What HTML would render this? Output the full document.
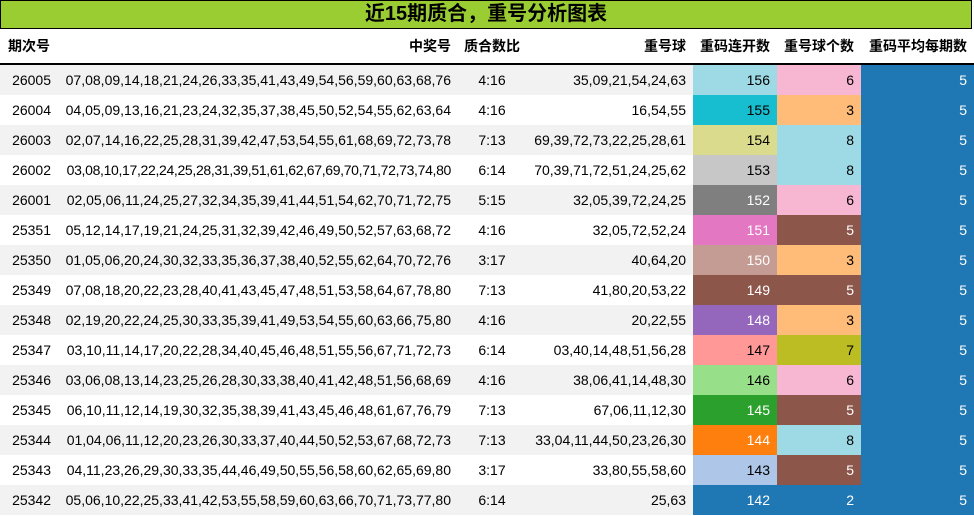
<!DOCTYPE html><html><head><meta charset="utf-8"><style>
body{margin:0;width:974px;height:516px;overflow:hidden;background:#fff;font-family:"Liberation Sans","Noto Sans CJK SC",sans-serif;font-size:14px;color:#000}
.t{position:absolute;left:0;top:0;width:970px;height:27px;background:#9acd32;border:1px solid #000;text-align:center;font-weight:bold;font-size:20px;line-height:27px}
table{position:absolute;top:29px;left:0;border-collapse:collapse;table-layout:fixed;width:974px}
th{height:34px;font-weight:bold;border-bottom:2px solid #000;padding:0 7px 0 0;text-align:right;white-space:nowrap;overflow:visible}
td{height:30px;padding:0 7px;text-align:right;white-space:nowrap;overflow:visible}
tbody tr:nth-child(odd){background:#f2f2f2}
.c3{text-align:center;padding:0}
.w{color:#fff}
</style></head><body>
<div class="t">近15期质合，重号分析图表</div>
<table>
<colgroup><col style="width:58px"><col style="width:400px"><col style="width:68px"><col style="width:167px"><col style="width:84px"><col style="width:84px"><col style="width:113px"></colgroup>
<thead><tr><th style="text-align:left;padding-left:8px">期次号</th><th>中奖号</th><th class="c3">质合数比</th><th>重号球</th><th>重码连开数</th><th>重号球个数</th><th>重码平均每期数</th></tr></thead>
<tbody>
<tr><td>26005</td><td>07,08,09,14,18,21,24,26,33,35,41,43,49,54,56,59,60,63,68,76</td><td class="c3">4:16</td><td>35,09,21,54,24,63</td><td style="background:#9edae5">156</td><td style="background:#f7b6d2">6</td><td class="w" style="background:#1f77b4">5</td></tr>
<tr><td>26004</td><td>04,05,09,13,16,21,23,24,32,35,37,38,45,50,52,54,55,62,63,64</td><td class="c3">4:16</td><td>16,54,55</td><td style="background:#17becf">155</td><td style="background:#ffbb78">3</td><td class="w" style="background:#1f77b4">5</td></tr>
<tr><td>26003</td><td>02,07,14,16,22,25,28,31,39,42,47,53,54,55,61,68,69,72,73,78</td><td class="c3">7:13</td><td>69,39,72,73,22,25,28,61</td><td style="background:#dbdb8d">154</td><td style="background:#9edae5">8</td><td class="w" style="background:#1f77b4">5</td></tr>
<tr><td>26002</td><td style="letter-spacing:-0.33px">03,08,10,17,22,24,25,28,31,39,51,61,62,67,69,70,71,72,73,74,80</td><td class="c3">6:14</td><td>70,39,71,72,51,24,25,62</td><td style="background:#c7c7c7">153</td><td style="background:#9edae5">8</td><td class="w" style="background:#1f77b4">5</td></tr>
<tr><td>26001</td><td>02,05,06,11,24,25,27,32,34,35,39,41,44,51,54,62,70,71,72,75</td><td class="c3">5:15</td><td>32,05,39,72,24,25</td><td class="w" style="background:#7f7f7f">152</td><td style="background:#f7b6d2">6</td><td class="w" style="background:#1f77b4">5</td></tr>
<tr><td>25351</td><td>05,12,14,17,19,21,24,25,31,32,39,42,46,49,50,52,57,63,68,72</td><td class="c3">4:16</td><td>32,05,72,52,24</td><td class="w" style="background:#e377c2">151</td><td class="w" style="background:#8c564b">5</td><td class="w" style="background:#1f77b4">5</td></tr>
<tr><td>25350</td><td>01,05,06,20,24,30,32,33,35,36,37,38,40,52,55,62,64,70,72,76</td><td class="c3">3:17</td><td>40,64,20</td><td class="w" style="background:#c49c94">150</td><td style="background:#ffbb78">3</td><td class="w" style="background:#1f77b4">5</td></tr>
<tr><td>25349</td><td>07,08,18,20,22,23,28,40,41,43,45,47,48,51,53,58,64,67,78,80</td><td class="c3">7:13</td><td>41,80,20,53,22</td><td class="w" style="background:#8c564b">149</td><td class="w" style="background:#8c564b">5</td><td class="w" style="background:#1f77b4">5</td></tr>
<tr><td>25348</td><td>02,19,20,22,24,25,30,33,35,39,41,49,53,54,55,60,63,66,75,80</td><td class="c3">4:16</td><td>20,22,55</td><td class="w" style="background:#9467bd">148</td><td style="background:#ffbb78">3</td><td class="w" style="background:#1f77b4">5</td></tr>
<tr><td>25347</td><td>03,10,11,14,17,20,22,28,34,40,45,46,48,51,55,56,67,71,72,73</td><td class="c3">6:14</td><td>03,40,14,48,51,56,28</td><td style="background:#ff9896">147</td><td style="background:#bcbd22">7</td><td class="w" style="background:#1f77b4">5</td></tr>
<tr><td>25346</td><td>03,06,08,13,14,23,25,26,28,30,33,38,40,41,42,48,51,56,68,69</td><td class="c3">4:16</td><td>38,06,41,14,48,30</td><td style="background:#98df8a">146</td><td style="background:#f7b6d2">6</td><td class="w" style="background:#1f77b4">5</td></tr>
<tr><td>25345</td><td>06,10,11,12,14,19,30,32,35,38,39,41,43,45,46,48,61,67,76,79</td><td class="c3">7:13</td><td>67,06,11,12,30</td><td class="w" style="background:#2ca02c">145</td><td class="w" style="background:#8c564b">5</td><td class="w" style="background:#1f77b4">5</td></tr>
<tr><td>25344</td><td>01,04,06,11,12,20,23,26,30,33,37,40,44,50,52,53,67,68,72,73</td><td class="c3">7:13</td><td>33,04,11,44,50,23,26,30</td><td class="w" style="background:#ff7f0e">144</td><td style="background:#9edae5">8</td><td class="w" style="background:#1f77b4">5</td></tr>
<tr><td>25343</td><td>04,11,23,26,29,30,33,35,44,46,49,50,55,56,58,60,62,65,69,80</td><td class="c3">3:17</td><td>33,80,55,58,60</td><td style="background:#aec7e8">143</td><td class="w" style="background:#8c564b">5</td><td class="w" style="background:#1f77b4">5</td></tr>
<tr><td>25342</td><td>05,06,10,22,25,33,41,42,53,55,58,59,60,63,66,70,71,73,77,80</td><td class="c3">6:14</td><td>25,63</td><td class="w" style="background:#1f77b4">142</td><td class="w" style="background:#1f77b4">2</td><td class="w" style="background:#1f77b4">5</td></tr>
</tbody></table>
</body></html>
